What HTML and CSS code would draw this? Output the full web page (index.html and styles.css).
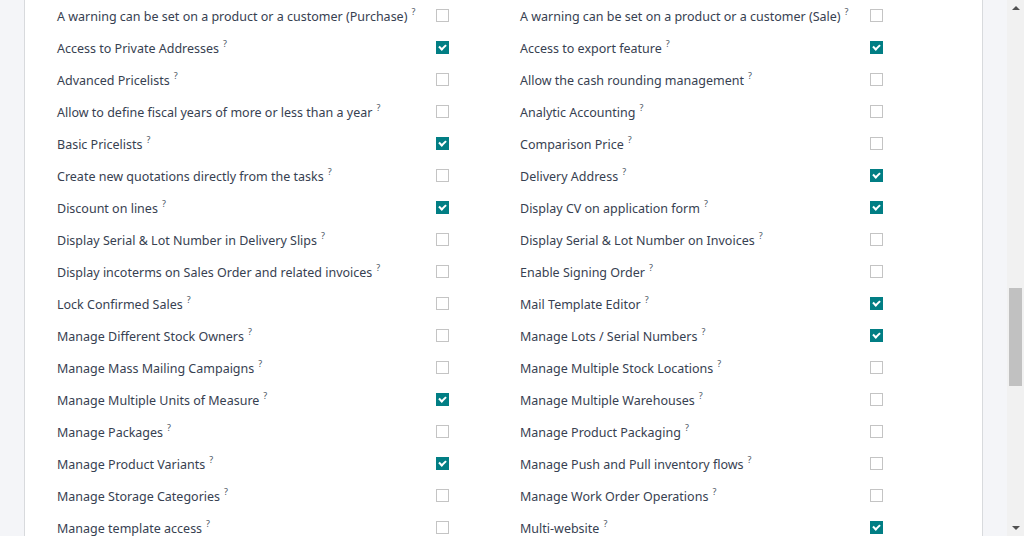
FILE: index.html
```html
<!DOCTYPE html>
<html lang="en">
  <head>
    <meta charset="UTF-8">
    <title>Settings</title>
    <link rel="stylesheet" href="styles.css">
  </head>
  <body>
    <div class="page">
      <div class="side"></div>
      <div class="sheet">
        <div class="groups">
          <label class="lbl">A warning can be set on a product or a customer (Purchase)<sup>?</sup></label><span class="cb"></span>
          <label class="lbl">A warning can be set on a product or a customer (Sale)<sup>?</sup></label><span class="cb"></span>

          <label class="lbl">Access to Private Addresses<sup>?</sup></label><span class="cb on"></span>
          <label class="lbl">Access to export feature<sup>?</sup></label><span class="cb on"></span>

          <label class="lbl">Advanced Pricelists<sup>?</sup></label><span class="cb"></span>
          <label class="lbl">Allow the cash rounding management<sup>?</sup></label><span class="cb"></span>

          <label class="lbl">Allow to define fiscal years of more or less than a year<sup>?</sup></label><span class="cb"></span>
          <label class="lbl">Analytic Accounting<sup>?</sup></label><span class="cb"></span>

          <label class="lbl">Basic Pricelists<sup>?</sup></label><span class="cb on"></span>
          <label class="lbl">Comparison Price<sup>?</sup></label><span class="cb"></span>

          <label class="lbl">Create new quotations directly from the tasks<sup>?</sup></label><span class="cb"></span>
          <label class="lbl">Delivery Address<sup>?</sup></label><span class="cb on"></span>

          <label class="lbl">Discount on lines<sup>?</sup></label><span class="cb on"></span>
          <label class="lbl">Display CV on application form<sup>?</sup></label><span class="cb on"></span>

          <label class="lbl">Display Serial &amp; Lot Number in Delivery Slips<sup>?</sup></label><span class="cb"></span>
          <label class="lbl">Display Serial &amp; Lot Number on Invoices<sup>?</sup></label><span class="cb"></span>

          <label class="lbl">Display incoterms on Sales Order and related invoices<sup>?</sup></label><span class="cb"></span>
          <label class="lbl">Enable Signing Order<sup>?</sup></label><span class="cb"></span>

          <label class="lbl">Lock Confirmed Sales<sup>?</sup></label><span class="cb"></span>
          <label class="lbl">Mail Template Editor<sup>?</sup></label><span class="cb on"></span>

          <label class="lbl">Manage Different Stock Owners<sup>?</sup></label><span class="cb"></span>
          <label class="lbl">Manage Lots / Serial Numbers<sup>?</sup></label><span class="cb on"></span>

          <label class="lbl">Manage Mass Mailing Campaigns<sup>?</sup></label><span class="cb"></span>
          <label class="lbl">Manage Multiple Stock Locations<sup>?</sup></label><span class="cb"></span>

          <label class="lbl">Manage Multiple Units of Measure<sup>?</sup></label><span class="cb on"></span>
          <label class="lbl">Manage Multiple Warehouses<sup>?</sup></label><span class="cb"></span>

          <label class="lbl">Manage Packages<sup>?</sup></label><span class="cb"></span>
          <label class="lbl">Manage Product Packaging<sup>?</sup></label><span class="cb"></span>

          <label class="lbl">Manage Product Variants<sup>?</sup></label><span class="cb on"></span>
          <label class="lbl">Manage Push and Pull inventory flows<sup>?</sup></label><span class="cb"></span>

          <label class="lbl">Manage Storage Categories<sup>?</sup></label><span class="cb"></span>
          <label class="lbl">Manage Work Order Operations<sup>?</sup></label><span class="cb"></span>

          <label class="lbl">Manage template access<sup>?</sup></label><span class="cb"></span>
          <label class="lbl">Multi-website<sup>?</sup></label><span class="cb on"></span>
        </div>
      </div>
      <div class="side"></div>
      <div class="scrollbar">
        <span class="arrow up"></span>
        <div class="track"><div class="thumb"></div></div>
        <span class="arrow down"></span>
      </div>
    </div>
  </body>
</html>
```

FILE: styles.css
```css
html, body { margin: 0; height: 100%; overflow: hidden; }
body { font-family: "Noto Sans", "Open Sans", sans-serif; font-size: 12.5px; color: #374151; background: #fff; }
.page { display: flex; height: 536px; }
.side { width: 24px; flex: none; background: #f4f5f8; }
.sheet { flex: 1; background: #fff; border-left: 1px solid #d8dadd; border-right: 1px solid #d8dadd; overflow: hidden; }
.groups { display: grid; grid-template-columns: 379px 84px 350px 13px; grid-auto-rows: 32px; align-items: center; padding-left: 32px; }
.lbl { white-space: nowrap; line-height: 30px; padding-top: 2px; }
.lbl sup { font-size: 9px; margin-left: 4px; vertical-align: 6px; line-height: 0; color: #4b5563; }
.cb { width: 11px; height: 11px; border: 1px solid #c4c4c4; background: #fff; margin-top: -1px; position: relative; }
.cb.on { background: #017e84; border-color: #017e84; }
.cb.on::after { content: ""; position: absolute; left: 3px; top: 1px; width: 3px; height: 5px; border: solid #fff; border-width: 0 2px 2px 0; transform: rotate(45deg); }
.scrollbar { width: 17px; flex: none; background: #f1f1f1; display: flex; flex-direction: column; align-items: center; }
.arrow { width: 0; height: 0; border-left: 4px solid transparent; border-right: 4px solid transparent; margin: 6px 0; }
.arrow.up { border-bottom: 4px solid #505050; }
.arrow.down { border-top: 4px solid #505050; }
.track { flex: 1; width: 100%; padding-top: 272px; box-sizing: border-box; }
.thumb { width: 13px; height: 98px; margin: 0 auto; background: #c1c1c1; }
```
